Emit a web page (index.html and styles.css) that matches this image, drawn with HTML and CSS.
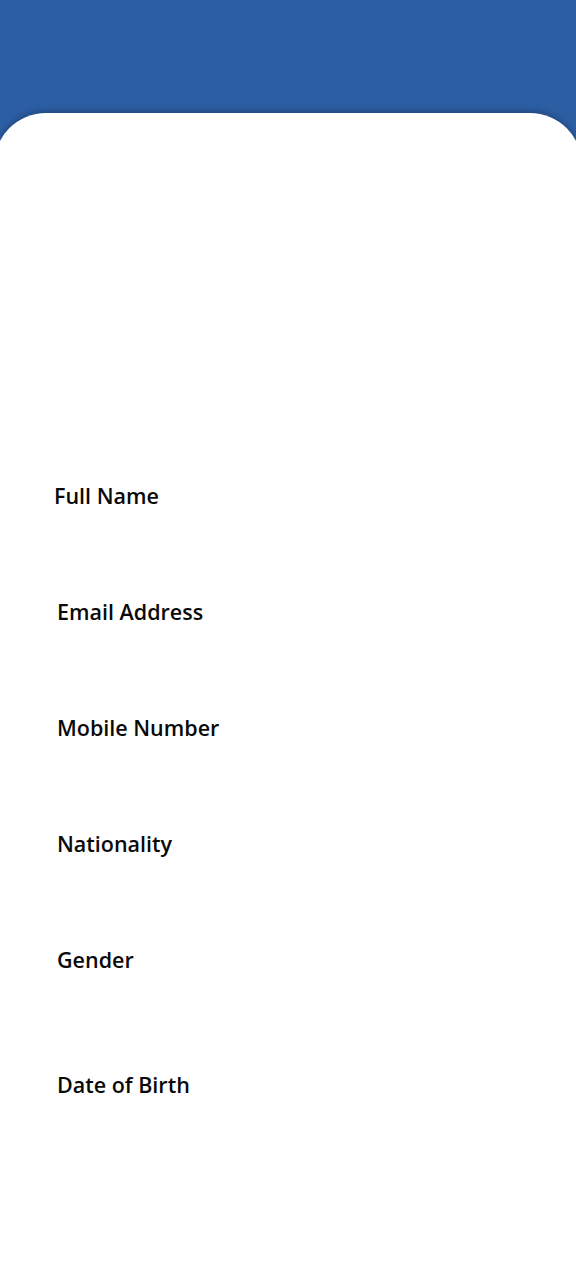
FILE: index.html
```html
<!DOCTYPE html>
<html>
<head>
<meta charset="utf-8">
<link rel="stylesheet" href="styles.css">
</head>
<body>
<div class="page">
  <header class="top"></header>
  <main class="card">
    <form class="form">
      <div class="field first"><label>Full Name</label></div>
      <div class="field"><label>Email Address</label></div>
      <div class="field"><label>Mobile Number</label></div>
      <div class="field"><label>Nationality</label></div>
      <div class="field"><label>Gender</label></div>
      <div class="field last"><label>Date of Birth</label></div>
    </form>
  </main>
</div>
</body>
</html>
```
FILE: styles.css
```css
html, body {
  margin: 0;
  padding: 0;
  background: #2c5ea4;
}
.page {
  width: 576px;
  height: 1266px;
  overflow: hidden;
  display: flex;
  flex-direction: column;
}
.top {
  height: 113px;
  flex: none;
  background: #2c5ea4;
}
.card {
  flex: 1;
  background: #ffffff;
  margin: 0 -6px;
  border-radius: 52px 52px 0 0;
  box-shadow: 0 -2px 6px rgba(0, 0, 0, 0.25);
  padding: 0 0 0 63px;
}
.form {
  display: flex;
  flex-direction: column;
  padding-top: 369px;
}
.field {
  height: 116px;
}
.field.first {
  margin-left: -3px;
}
.field.last {
  margin-top: 9px;
}
.field label {
  font-family: "Open Sans", sans-serif;
  font-weight: 600;
  font-size: 21.5px;
  line-height: 28px;
  color: #0a0a0a;
  display: block;
}
```
